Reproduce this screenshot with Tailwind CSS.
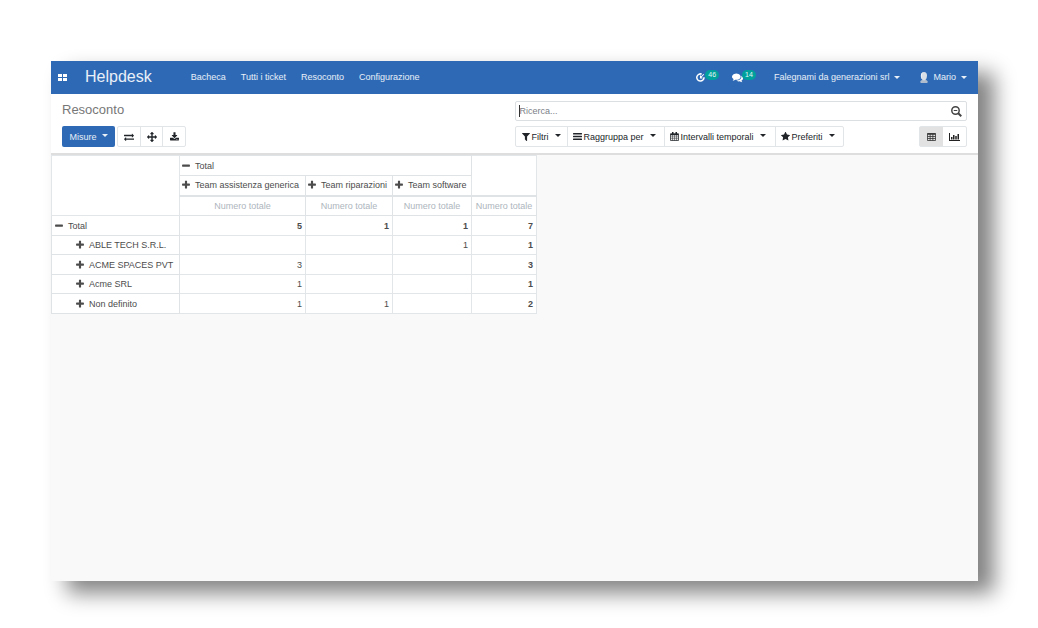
<!DOCTYPE html>
<html lang="it">
<head>
<meta charset="utf-8">
<meta name="viewport" content="width=device-width, initial-scale=1">
<title>Helpdesk - Resoconto</title>
<script src="https://cdn.jsdelivr.net/npm/@tailwindcss/browser@4"></script>
</head>
<body class="flex min-h-screen bg-white pt-[61px] pr-[60px] pb-[47px] pl-[51px] font-['Liberation_Sans',Arial,sans-serif] text-[9px] leading-3 text-[#4c4c4c]">
<svg class="hidden" aria-hidden="true">
  <symbol id="plus" viewBox="0 0 1792 1792"><path d="M1600 736v192q0 40-28 68t-68 28h-416v416q0 40-28 68t-68 28h-192q-40 0-68-28t-28-68v-416h-416q-40 0-68-28t-28-68v-192q0-40 28-68t68-28h416v-416q0-40 28-68t68-28h192q40 0 68 28t28 68v416h416q40 0 68 28t28 68z"/></symbol>
  <symbol id="minus" viewBox="0 0 1792 1792"><path d="M1600 736v192q0 40-28 68t-68 28h-1216q-40 0-68-28t-28-68v-192q0-40 28-68t68-28h1216q40 0 68 28t28 68z"/></symbol>
  <symbol id="caret" viewBox="0 0 6 3"><path d="M0 0h6L3 3z"/></symbol>
</svg>
<div class="flex min-w-0 flex-1 flex-col bg-[#f9f9f9] shadow-[16px_12px_20px_rgba(0,0,0,0.49)]">
  <header class="flex h-[33px] items-center bg-[#2d69b5] pr-[11px] pb-px pl-[7px] text-white/90">
    <button aria-label="Applicazioni" class="text-white"><svg class="h-[7px] w-[9px]" viewBox="0 0 9 7" fill="currentColor"><path d="M0 0h4v3H0zM5 0h4v3H5zM0 4h4v3H0zM5 4h4v3H5z"/></svg></button>
    <a href="#" class="ml-[18px] text-base">Helpdesk</a>
    <nav class="ml-[39px] flex gap-[15px]">
      <a href="#">Bacheca</a><a href="#">Tutti i ticket</a><a href="#">Resoconto</a><a href="#">Configurazione</a>
    </nav>
    <div class="ml-auto flex items-center">
      <button class="flex items-center" aria-label="Attività">
        <svg class="size-[9px]" viewBox="0 0 18 18" fill="none" stroke="#fff" stroke-width="3"><path d="M11.500 2.300A7.200 7.200 0 1 0 16 8.500"/><path d="M15.500 2.500L9 9.500M9 5v5h4" stroke-width="2.200"/></svg>
        <span class="mb-1 rounded-full bg-[#00a09d] px-[3px] text-[7px] leading-[10px]">46</span>
      </button>
      <button class="ml-[13px] flex items-center" aria-label="Messaggi">
        <svg class="size-[11px]" viewBox="0 0 1792 1792" fill="#fff"><path d="M1408 768q0 139-94 257t-256.500 186.500-353.500 68.500q-86 0-176-16-124 88-278 128-36 9-86 16h-3q-11 0-20.500-8t-11.500-21q-1-3-1-6.500t.5-6.500 2-6l2.500-5 3.500-5.500 4-5 4.500-5 4-4.500q5-6 23-25t26-29.500 22.500-29 25-38.500 20.500-44q-124-72-195-177t-71-224q0-139 94-257t256.500-186.500 353.500-68.500 353.500 68.500 256.500 186.500 94 257zm384 256q0 120-71 224.500t-195 176.500q10 24 20.500 44t25 38.500 22.500 29 26 29.500 23 25q1 1 4 4.500t4.500 5 4 5 3.500 5.500l2.500 5 2 6 .5 6.500-1 6.500q-3 14-13 22t-22 7q-50-7-86-16-154-40-278-128-90 16-176 16-271 0-472-132 58 4 88 4 161 0 309-45t264-129q125-92 192-212t67-254q0-77-23-152 129 71 204 178t75 230z"/></svg>
        <span class="mb-1 -ml-px rounded-full bg-[#00a09d] px-[3px] text-[7px] leading-[10px]">14</span>
      </button>
      <button class="ml-[18px] flex items-center gap-[5px]">Falegnami da generazioni srl <svg class="h-[3px] w-[6px]" fill="currentColor"><use href="#caret"/></svg></button>
      <button class="ml-5 flex items-center gap-[5px]">
        <svg class="h-[11px] w-2" viewBox="0 0 16 22"><path d="M0 20q1-4 6-5h4q5 1 6 5l-2 2H2z" fill="#aebccd"/><path d="M8 0c4 0 6 3 6 7 0 5-2 10-6 10S2 12 2 7c0-4 2-7 6-7z" fill="#d9dfe6"/><path d="M6 1c-3 2-4 9-1 14-5-4-4-13 1-14z" fill="#fff"/></svg>
        Mario <svg class="h-[3px] w-[6px]" fill="currentColor"><use href="#caret"/></svg></button>
    </div>
  </header>

  <section class="grid grid-cols-2 gap-y-[5px] border-b-2 border-[#dedede] bg-white pt-[7px] pb-[6px]">
    <h1 class="pl-[11px] text-[13px] leading-[18px] text-[#777]">Resoconto</h1>
    <div class="pr-[11px]"><label class="flex h-5 items-center rounded-xs border border-[#dcdfe2] pr-1 pl-[3px]">
      <input type="text" aria-label="Ricerca" placeholder="Ricerca..." class="h-3 min-w-0 flex-1 border-l border-[#333] bg-transparent outline-none placeholder:text-[#7b8087]">
      <svg class="size-[11px]" viewBox="0 0 22 22" fill="none" stroke="#444" stroke-width="3"><circle cx="9" cy="9" r="7.400"/><path d="M14.500 14.500l6 6" stroke-width="3.800"/><path d="M5.500 9h7" stroke-width="2"/></svg>
    </label></div>
    <div class="flex gap-[2px] pl-[11px] text-[#212529]">
      <button class="flex h-[21px] w-[53px] items-center justify-center gap-[5px] rounded-xs bg-[#2d69b5] text-white/90">Misure <svg class="mb-[3px] h-[3px] w-[6px]" fill="currentColor"><use href="#caret"/></svg></button>
      <div class="flex h-[21px] w-[69px] divide-x divide-[#e2e5e8] rounded-xs border border-[#e2e5e8]">
        <button class="flex flex-1 items-center justify-center" aria-label="Inverti assi"><svg class="size-[10px]" viewBox="0 0 1792 1792" fill="currentColor"><path d="M1792 1184v192q0 13-9.500 22.500t-22.500 9.500h-1376v192q0 13-9.500 22.500t-22.500 9.500q-12 0-24-10l-319-320q-9-9-9-22 0-14 9-23l320-320q9-9 23-9 13 0 22.500 9.500t9.500 22.500v192h1376q13 0 22.500 9.500t9.500 22.500zm0-544q0 14-9 23l-320 320q-9 9-23 9-13 0-22.500-9.500t-9.500-22.500v-192h-1376q-13 0-22.500-9.500t-9.500-22.500v-192q0-13 9.500-22.500t22.500-9.500h1376v-192q0-14 9-23t23-9q12 0 24 10l319 319q9 9 9 23z"/></svg></button>
        <button class="flex flex-1 items-center justify-center" aria-label="Espandi tutto"><svg class="size-[10px]" viewBox="0 0 1792 1792" fill="currentColor"><path d="M1792 896q0 26-19 45l-256 256q-19 19-45 19t-45-19-19-45v-128h-384v384h128q26 0 45 19t19 45-19 45l-256 256q-19 19-45 19t-45-19l-256-256q-19-19-19-45t19-45 45-19h128v-384h-384v128q0 26-19 45t-45 19-45-19l-256-256q-19-19-19-45t19-45l256-256q19-19 45-19t45 19 19 45v128h384v-384h-128q-26 0-45-19t-19-45 19-45l256-256q19-19 45-19t45 19l256 256q19 19 19 45t-19 45-45 19h-128v384h384v-128q0-26 19-45t45-19 45 19l256 256q19 19 19 45z"/></svg></button>
        <button class="flex flex-1 items-center justify-center" aria-label="Scarica"><svg class="size-[9px]" viewBox="64 0 1664 1600" fill="currentColor"><path d="M1344 1344q0-26-19-45t-45-19-45 19-19 45 19 45 45 19 45-19 19-45zm256 0q0-26-19-45t-45-19-45 19-19 45 19 45 45 19 45-19 19-45zm128-224v320q0 40-28 68t-68 28h-1472q-40 0-68-28t-28-68v-320q0-40 28-68t68-28h465l135 136q58 56 136 56t136-56l136-136h464q40 0 68 28t28 68zm-325-569q17 41-14 70l-448 448q-18 19-45 19t-45-19l-448-448q-31-29-14-70 17-39 59-39h256v-448q0-26 19-45t45-19h256q26 0 45 19t19 45v448h256q42 0 59 39z"/></svg></button>
      </div>
    </div>
    <div class="flex justify-between pr-[11px] text-[#212529]">
      <div class="flex h-[21px] divide-x divide-[#e2e5e8] rounded-xs border border-[#e2e5e8]">
        <button class="flex w-[52px] items-center pl-[6px]"><svg class="mr-[2px] size-2" viewBox="192 256 1408 1408" fill="currentColor"><path d="M1595 295q17 41-14 70l-493 493v742q0 42-39 59-13 5-25 5-27 0-45-19l-256-256q-19-19-19-45v-486l-493-493q-31-29-14-70 17-39 59-39h1280q42 0 59 39z"/></svg>Filtri<svg class="mb-[3px] ml-[6px] h-[3px] w-[6px]" fill="currentColor"><use href="#caret"/></svg></button>
        <button class="flex w-[97px] items-center pl-[5px]"><svg class="mr-[2px] h-[7px] w-[9px]" viewBox="0 0 18 14" fill="currentColor"><path d="M1 0h16q1 0 1 1v1q0 1-1 1H1Q0 3 0 2V1q0-1 1-1zM1 5.500h16q1 0 1 1v1q0 1-1 1H1q-1 0-1-1v-1q0-1 1-1zM1 11h16q1 0 1 1v1q0 1-1 1H1q-1 0-1-1v-1q0-1 1-1z"/></svg>Raggruppa per<svg class="mb-[3px] ml-[6px] h-[3px] w-[6px]" fill="currentColor"><use href="#caret"/></svg></button>
        <button class="flex w-[111px] items-center pl-[5px]"><svg class="mr-[2px] size-[9px]" viewBox="0 0 18 18" fill="none" stroke="currentColor"><path d="M1 3.500h16v13.500H1z" stroke-width="1.500"/><path d="M1 5h16" stroke-width="3"/><path d="M5.500 0v5M12.500 0v5" stroke-width="3"/><path d="M1 9.800h16M1 13.400h16M5 6v11M9 6v11M13 6v11" stroke-width="1"/></svg>Intervalli temporali<svg class="mb-[3px] ml-[6px] h-[3px] w-[6px]" fill="currentColor"><use href="#caret"/></svg></button>
        <button class="flex w-[67px] items-center pl-[5px]"><svg class="mr-[2px] size-[9px]" viewBox="64 64 1664 1664" fill="currentColor"><path d="M1728 647q0 22-26 48l-363 354 86 500q1 7 1 20 0 21-10.500 35.500t-30.500 14.500q-19 0-40-12l-449-236-449 236q-22 12-40 12-21 0-31.500-14.500t-10.500-35.500q0-6 2-20l86-500-364-354q-25-27-25-48 0-37 56-46l502-73 225-455q19-41 49-41t49 41l225 455 502 73q56 9 56 46z"/></svg>Preferiti<svg class="mb-[3px] ml-[6px] h-[3px] w-[6px]" fill="currentColor"><use href="#caret"/></svg></button>
      </div>
      <div class="flex h-[21px] w-12 rounded-xs border border-[#e2e5e8]">
        <button class="flex flex-1 items-center justify-center bg-[#e2e2e2]" aria-label="Pivot"><svg class="h-2 w-[9px]" viewBox="0 0 18 16" fill="none" stroke="#333"><path d="M1 1h16v14H1z" stroke-width="1.600"/><path d="M1 2h16" stroke-width="3"/><path d="M1 7h16M1 11h16M6.300 2v13M11.700 2v13" stroke-width="1.600"/></svg></button>
        <button class="flex flex-1 items-center justify-center" aria-label="Grafico"><svg class="h-2 w-[11px]" viewBox="0 0 22 16" fill="#222"><path d="M0 0h2v14H22v2H0zM4 8h3v5H4zM8 4h3v9H8zM12.500 6h3v7h-3zM17 2h3v11h-3z"/></svg></button>
      </div>
    </div>
  </section>

  <table class="w-[485px] table-fixed border-collapse bg-white [&_td]:border [&_td]:border-[#e3e6e9] [&_td]:px-[3px] [&_td]:text-right [&_th]:border [&_th]:border-[#e0e3e6] [&_th]:p-0 [&_th]:font-normal [&_th]:whitespace-nowrap">
    <colgroup><col class="w-[128px]"><col class="w-[126px]"><col class="w-[87px]"><col class="w-[79px]"><col class="w-[65px]"></colgroup>
    <thead>
      <tr class="h-5"><td rowspan="3"></td><th colspan="3" scope="colgroup"><button class="flex items-center gap-1 pl-px"><svg class="size-[10px]" fill="currentColor"><use href="#minus"/></svg>Total</button></th><td rowspan="2"></td></tr>
      <tr class="h-5">
        <th scope="col"><button class="flex items-center gap-1 pl-px"><svg class="size-[10px]" fill="currentColor"><use href="#plus"/></svg>Team assistenza generica</button></th>
        <th scope="col"><button class="flex items-center gap-1 pl-px"><svg class="size-[10px]" fill="currentColor"><use href="#plus"/></svg>Team riparazioni</button></th>
        <th scope="col"><button class="flex items-center gap-1 pl-px"><svg class="size-[10px]" fill="currentColor"><use href="#plus"/></svg>Team software</button></th>
      </tr>
      <tr class="h-5 text-center text-[#adb5bd] [&>th]:border-t-2"><th scope="col">Numero totale</th><th scope="col">Numero totale</th><th scope="col">Numero totale</th><th scope="col">Numero totale</th></tr>
    </thead>
    <tbody>
      <tr class="h-5 font-bold"><th scope="row"><button class="flex items-center gap-1 pl-[2px]"><svg class="size-[10px]" fill="currentColor"><use href="#minus"/></svg>Total</button></th><td>5</td><td>1</td><td>1</td><td>7</td></tr>
      <tr class="h-[19px]"><th scope="row"><button class="flex items-center gap-1 pl-[23px]"><svg class="size-[10px]" fill="currentColor"><use href="#plus"/></svg>ABLE TECH S.R.L.</button></th><td></td><td></td><td>1</td><td class="font-bold">1</td></tr>
      <tr class="h-5"><th scope="row"><button class="flex items-center gap-1 pl-[23px]"><svg class="size-[10px]" fill="currentColor"><use href="#plus"/></svg>ACME SPACES PVT</button></th><td>3</td><td></td><td></td><td class="font-bold">3</td></tr>
      <tr class="h-[19px]"><th scope="row"><button class="flex items-center gap-1 pl-[23px]"><svg class="size-[10px]" fill="currentColor"><use href="#plus"/></svg>Acme SRL</button></th><td>1</td><td></td><td></td><td class="font-bold">1</td></tr>
      <tr class="h-5"><th scope="row"><button class="flex items-center gap-1 pl-[23px]"><svg class="size-[10px]" fill="currentColor"><use href="#plus"/></svg>Non definito</button></th><td>1</td><td>1</td><td></td><td class="font-bold">2</td></tr>
    </tbody>
  </table>
</div>
</body>
</html>
